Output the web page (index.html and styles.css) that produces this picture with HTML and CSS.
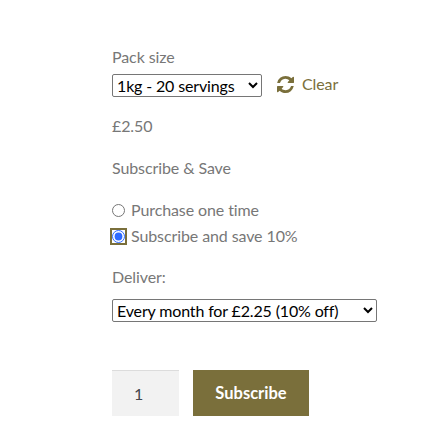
FILE: index.html
```html
<!DOCTYPE html>
<html lang="en">
<head>
<meta charset="utf-8">
<title>Subscribe</title>
<link rel="stylesheet" href="styles.css">
</head>
<body>
<form class="product">
  <label class="label" for="pack">Pack size</label>
  <div class="variant-row">
    <select id="pack" class="select select-pack"><option>1kg - 20 servings</option></select>
    <a class="clear" href="#">
      <svg class="clear-icon" viewBox="128 128 1536 1536" aria-hidden="true"><path d="M1639 1056q0 5-1 7-64 268-268 434.5t-478 166.5q-146 0-282.5-55t-243.5-157l-129 129q-19 19-45 19t-45-19-19-45v-448q0-26 19-45t45-19h448q26 0 45 19t19 45-19 45l-137 137q71 66 161 102t187 36q134 0 250-65t186-179q11-17 53-117 8-23 30-23h192q13 0 22.5 9.5t9.5 22.5zm25-800v448q0 26-19 45t-45 19h-448q-26 0-45-19t-19-45 19-45l138-138q-148-137-349-137-134 0-250 65t-186 179q-11 17-53 117-8 23-30 23h-199q-13 0-22.5-9.5t-9.5-22.5v-7q65-268 270-434.5t480-166.5q146 0 284 55.5t245 156.5l130-129q19-19 45-19t45 19 19 45z"/></svg>
      <span>Clear</span>
    </a>
  </div>
  <p class="price">£2.50</p>
  <p class="heading">Subscribe &amp; Save</p>
  <div class="options">
    <label class="option"><input class="radio" type="radio" name="plan"><span>Purchase one time</span></label>
    <label class="option"><input class="radio radio-focus" type="radio" name="plan" checked><span>Subscribe and save 10%</span></label>
  </div>
  <label class="label deliver" for="deliver">Deliver:</label>
  <select id="deliver" class="select select-deliver"><option>Every month for £2.25 (10% off)</option></select>
  <div class="buy-row">
    <input class="qty" type="number" value="1" aria-label="Quantity">
    <button class="submit" type="button">Subscribe</button>
  </div>
</form>
</body>
</html>
```
FILE: styles.css
```css
* { box-sizing: border-box; }
html, body { margin: 0; background: #fff; }
body {
  font-family: Lato, "Liberation Sans", sans-serif;
  font-size: 16px;
  line-height: 24px;
  letter-spacing: -0.1px;
  color: #777;
}
.product {
  display: flex;
  flex-direction: column;
  align-items: flex-start;
  padding: 45px 0 0 112px;
}
.label { display: block; }
.variant-row {
  display: flex;
  align-items: center;
  margin-top: 5px;
  height: 23px;
}
.select {
  height: 23px;
  padding: 0;
  font-family: Lato, "Liberation Sans", sans-serif;
  font-size: 16px;
  letter-spacing: -0.15px;
  color: #000;
  background: #fff;
  border: 1px solid #767676;
  border-radius: 2px;
}
.select-pack { width: 150px; }
.select-deliver { width: 265px; margin-top: 10px; }
.clear {
  display: flex;
  align-items: center;
  margin-left: 15px;
  margin-top: -3px;
  color: #7a6f3b;
  text-decoration: none;
}
.clear-icon { width: 17px; height: 17px; fill: #7a6f3b; margin-right: 8px; }
.price { margin: 17px 0 0; }
.heading { margin: 18px 0 0; }
.options { margin-top: 18px; display: flex; flex-direction: column; }
.option { display: flex; align-items: center; height: 24px; margin-bottom: 2px; }
.radio { width: 13px; height: 13px; margin: 0 6px 0 0; accent-color: #2f6bff; }
.radio-focus { outline: 2px solid #7a6f3b; outline-offset: 0; }
.deliver { margin-top: 15px; }
.buy-row { display: flex; margin-top: 48px; gap: 14px; }
.qty {
  width: 67px;
  height: 46px;
  padding: 0 0 0 22px;
  font-family: Lato, "Liberation Sans", sans-serif;
  font-size: 16px;
  color: #43454b;
  background: #f2f2f2;
  border: 0;
  border-top: 1px solid #dcdcdc;
  appearance: textfield;
}
.qty::-webkit-inner-spin-button { appearance: none; }
.submit {
  width: 116px;
  height: 46px;
  padding: 0;
  font-family: Lato, "Liberation Sans", sans-serif;
  font-size: 16.5px;
  font-weight: 700;
  letter-spacing: 0;
  color: #fff;
  background: #7a6f3b;
  border: 0;
}
```
